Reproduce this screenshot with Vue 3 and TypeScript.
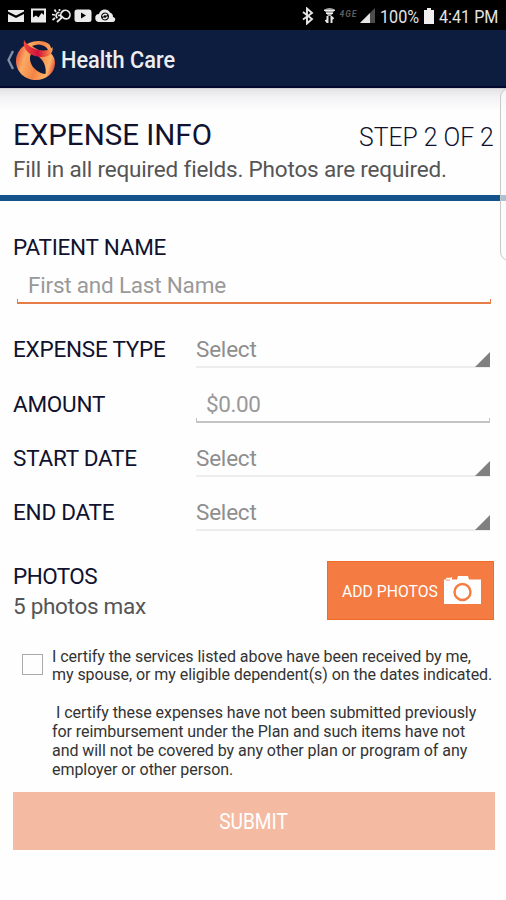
<script setup lang="ts">
import { ref } from 'vue'

interface Field {
  label: string
  kind: 'select' | 'amount'
  placeholder: string
}

const fields: Field[] = [
  { label: 'EXPENSE TYPE', kind: 'select', placeholder: 'Select' },
  { label: 'AMOUNT', kind: 'amount', placeholder: '$0.00' },
  { label: 'START DATE', kind: 'select', placeholder: 'Select' },
  { label: 'END DATE', kind: 'select', placeholder: 'Select' },
]

const patientName = ref('')
const amount = ref('')
const certified = ref(false)
</script>

<template>
  <div class="screen">
    <div class="status">
      <svg class="status-left" width="108" height="18" viewBox="0 0 108 18" fill="#ebebeb">
        <path d="M0 3h16v1.500L8 8.500 0 4.500zM0 7l8 4 8-4v8H0z" />
        <path fill-rule="evenodd" d="M23 1.500h15v14H23zM25 3.500v7l3-2 2.500 2 3-4.500 2.500 2V3.500z" />
        <g fill="none" stroke="#ebebeb" stroke-width="1.700">
          <path d="M54 11a4.600 4.600 0 1 1 6.500 0.300Q57 13 54.500 10 53 8 50 8.500M55 9.500 49 15M51.500 5.500a3 3 0 0 0-2 5.500M46.500 2.500l1.500 2.500M44 7.500l3 .5M44.500 13l2.500-2M51.500 2v2" />
        </g>
        <path fill-rule="evenodd" d="M69 2.500h12q2.500 0 2.500 2.500v7.500q0 2.500-2.500 2.500H69q-2.500 0-2.500-2.500V5q0-2.500 2.500-2.500zM73 5.500v6l5-3z" />
        <path fill-rule="evenodd" d="M91.500 15a4 4 0 0 1-.5-8 6 6 0 0 1 11-1.500 4.500 4.500 0 0 1 3 4.500q3 .5 2 3.500-.5 1.500-3 1.500zM97 5.500a4 4 0 1 0 .1 0z" />
        <path d="M94.800 9.500a2.200 2.200 0 0 1 4-1.200M99.200 9.500a2.200 2.200 0 0 1-4 1.200" fill="none" stroke="#ebebeb" stroke-width="1.600" />
      </svg>
      <div class="status-right">
        <svg width="76" height="18" viewBox="0 0 76 18">
          <path d="M3 5l9 7-5 4.500v-15L12 6l-9 6.500" fill="none" stroke="#e6e6e6" stroke-width="1.900" />
          <path d="M24 2.500q5.500-3 11 0L31 9h-3z" fill="#a9a9a9" />
          <path d="M24 3.500h11M26 6.500h7" stroke="#ededed" stroke-width="1.200" />
          <path d="M27.500 9v7M25.500 13l2 2.500M31.500 16V9M33.500 12l-2-2.500" fill="none" stroke="#e6e6e6" stroke-width="2" />
          <text x="39.500" y="9.500" class="network" textLength="17">4GE</text>
          <path d="M60 16 75 1v15z" fill="#4c4c4c" />
          <path d="M60 16 70 6v10z" fill="#e6e6e6" />
        </svg>
        <span class="battery-text">100%</span>
        <svg class="battery" width="10" height="16" viewBox="0 0 10 16"><path d="M3 0h4v2h3v14H0V2h3z" fill="#f0f0f0" /></svg>
        <span class="clock">4:41 PM</span>
      </div>
    </div>

    <header class="app-bar">
      <svg class="back" width="8" height="20" viewBox="0 0 8 20"><path d="M7 1 2.500 10 7 19" fill="none" stroke="#8290a8" stroke-width="2.300" /></svg>
      <svg class="logo" width="41" height="41" viewBox="0 0 41 41">
        <defs>
          <linearGradient id="ring" x1="0" y1="0.350" x2="1" y2="0.650">
            <stop offset="0" stop-color="#e9513b" />
            <stop offset="0.220" stop-color="#fbaa62" />
            <stop offset="0.550" stop-color="#f58346" />
            <stop offset="0.850" stop-color="#fdb467" />
            <stop offset="1" stop-color="#e44b3c" />
          </linearGradient>
          <linearGradient id="ribbon" x1="0" y1="0" x2="1" y2="0">
            <stop offset="0" stop-color="#ef493a" />
            <stop offset="0.500" stop-color="#ce123d" />
            <stop offset="0.800" stop-color="#f0643e" />
            <stop offset="1" stop-color="#fca45c" />
          </linearGradient>
        </defs>
        <path d="M12 4C19 0 29 0 34 4q3 3 1.500 9Q40 17 40 23C40 33 31 40 21 40 10 40 1 32 1 21 1 13 6 7 12 4z" fill="url(#ring)" />
        <path d="M17 6q7-3 12 0 4 2 4 5-7 2-16-5z" fill="#0d1a3b" />
        <path d="M16 14C25 14 32 24 30.500 34 20 33 12 22 16 14z" fill="#0d1a3b" />
        <path d="M9 0c4 7 11 10 19 10.500 5 0 8-1 9.500-3.500 1 6-3 10-10 10C17 17 7 11 9 0z" fill="url(#ribbon)" />
      </svg>
      <span class="app-title">Health Care</span>
    </header>

    <main>
      <section class="intro">
        <div class="intro-head">
          <h1>EXPENSE INFO</h1>
          <span class="step">STEP 2 OF 2</span>
        </div>
        <p>Fill in all required fields. Photos are required.</p>
      </section>

      <section class="patient">
        <label class="label" for="patient">PATIENT NAME</label>
        <div class="line-input active">
          <input id="patient" v-model="patientName" type="text" placeholder="First and Last Name" />
        </div>
      </section>

      <div v-for="field in fields" :key="field.label" class="row">
        <span class="label">{{ field.label }}</span>
        <button v-if="field.kind === 'select'" class="select" type="button">
          <span>{{ field.placeholder }}</span>
          <svg width="15" height="15" viewBox="0 0 15 15"><path d="M15 0v15H0z" fill="#808080" /></svg>
        </button>
        <div v-else class="line-input amount">
          <input v-model="amount" type="text" :placeholder="field.placeholder" />
        </div>
      </div>

      <section class="photos">
        <div class="photos-text">
          <span class="label">PHOTOS</span>
          <span class="hint">5 photos max</span>
        </div>
        <button class="add" type="button">
          <span>ADD PHOTOS</span>
          <svg width="37" height="29" viewBox="0 0 37 29">
            <path d="M0 3.500h2V1h6v2.500h5L14 0h10l1 3.500h12V28H0z" fill="#fff" />
            <path d="M1 1.500h6M2 4h4" stroke="#f47b42" stroke-width="0.800" />
            <circle cx="18.500" cy="16" r="8" fill="none" stroke="#f47b42" stroke-width="2.400" />
          </svg>
        </button>
      </section>

      <section class="certify">
        <input v-model="certified" type="checkbox" class="check" aria-labelledby="terms" />
        <div id="terms">
          <p>I certify the services listed above have been received by me,<br />my spouse, or my eligible dependent(s) on the dates indicated.</p>
          <p><span class="indent">I certify these expenses have not been submitted previously</span><br />for reimbursement under the Plan and such items have not<br />and will not be covered by any other plan or program of any<br />employer or other person.</p>
        </div>
      </section>

      <button class="submit" type="button"><span>SUBMIT</span></button>
    </main>
    <div class="edge-panel"></div>
  </div>
</template>

<style>
body {
  margin: 0;
}
</style>

<style scoped>
.screen {
  position: relative;
  width: 506px;
  height: 900px;
  overflow: hidden;
  background: #fefefe;
  font-family: Roboto, "Liberation Sans", sans-serif;
  color: #10122f;
}
.screen * {
  box-sizing: border-box;
}
button,
input {
  font-family: inherit;
  border: 0;
  padding: 0;
  margin: 0;
  background: none;
  border-radius: 0;
}
span {
  white-space: nowrap;
}
.status {
  height: 30px;
  background: #000;
  display: flex;
  align-items: center;
  justify-content: space-between;
  padding: 2px 8px 0;
}
.status-right {
  display: flex;
  align-items: center;
  color: #e4e4e4;
  font-size: 19px;
}
.network {
  font-size: 8.500px;
  font-style: italic;
  font-weight: 700;
  fill: #5c5c5c;
}
.battery-text {
  margin-left: 4px;
  width: 39px;
  transform: scaleX(0.850);
  transform-origin: left;
}
.battery {
  margin-left: 5px;
}
.clock {
  margin-left: 5px;
  width: 59px;
  transform: scaleX(0.850);
  transform-origin: left;
}
.app-bar {
  height: 58px;
  background: #0d1d40;
  border-bottom: 2px solid #03082e;
  display: flex;
  align-items: center;
  padding: 4px 0 0 6px;
}
.logo {
  margin-left: 1px;
}
.app-title {
  margin-left: 5px;
  font-size: 23px;
  transform: scaleX(0.945);
  transform-origin: left;
  font-weight: 500;
  color: #ededf0;
}
.intro {
  height: 113px;
  padding: 29px 12px 0 13px;
  border-bottom: 6px solid #145389;
  background: linear-gradient(#bebebe 0, #e3e3e6 1px, #f2f2f4 9px, #fefefe 22px);
}
.intro-head {
  display: flex;
  justify-content: space-between;
  height: 36px;
}
h1 {
  margin: 0;
  font-size: 29.500px;
  line-height: 36px;
  font-weight: 400;
  white-space: nowrap;
}
.step {
  font-size: 26px;
  line-height: 40px;
  font-weight: 300;
  transform: scaleX(0.950);
  transform-origin: right;
}
.intro p {
  margin: 2px 0 0;
  font-size: 22.500px;
  letter-spacing: -0.180px;
  line-height: 28px;
  color: #555;
  white-space: nowrap;
}
.label {
  font-size: 22.500px;
  line-height: 28px;
  letter-spacing: -0.230px;
}
.patient {
  height: 121px;
  padding: 32px 15px 0 13px;
}
.patient .label {
  display: block;
}
.line-input {
  position: relative;
  display: flex;
  border-bottom: 2px solid #c4c4c4;
}
.line-input::before,
.line-input::after {
  content: "";
  position: absolute;
  bottom: 0;
  width: 1px;
  height: 3px;
  background: #c4c4c4;
}
.line-input::before {
  left: 0;
}
.line-input::after {
  right: 0;
}
.active {
  margin: 8px 0 0 4px;
  height: 35px;
  border-color: #e67c48;
}
.active::before,
.active::after {
  background: #e67c48;
}
.line-input input {
  width: 100%;
  height: 31px;
  padding-left: 11px;
  font-size: 22.500px;
  letter-spacing: -0.210px;
  outline: none;
}
input::placeholder {
  color: #999;
  opacity: 1;
}
.row {
  height: 54.400px;
  padding: 0 16px 0 13px;
  display: grid;
  grid-template-columns: 183px 1fr;
  align-items: center;
}
.select {
  display: flex;
  justify-content: space-between;
  align-items: flex-end;
  height: 38px;
  border-bottom: 2px solid #ededed;
  font-size: 22.500px;
  letter-spacing: -0.210px;
  line-height: 28px;
  color: #8e8e8e;
}
.select span {
  margin-bottom: 3px;
}
.select svg {
  margin-bottom: -1px;
}
.amount {
  height: 38px;
}
.line-input.amount input {
  height: 38px;
  padding-left: 10px;
  letter-spacing: -0.400px;
}
.photos {
  margin-top: 21px;
  height: 59px;
  padding: 0 12px 0 13px;
  display: flex;
  justify-content: space-between;
}
.photos-text {
  display: flex;
  flex-direction: column;
  padding-top: 1px;
}
.photos-text .label {
  letter-spacing: -0.550px;
}
.hint {
  margin-top: 1px;
  font-size: 22.500px;
  letter-spacing: -0.300px;
  line-height: 30px;
  color: #555;
}
.add {
  width: 167px;
  background: #f47b42;
  border: 1px solid #f06b28;
  color: #fff;
  font-size: 17px;
  display: flex;
  align-items: center;
  padding: 2px 0 0 14px;
}
.add span {
  width: 96px;
  text-align: left;
  transform: scaleX(0.925);
  transform-origin: left;
}
.add svg {
  margin: 0 0 1px 6px;
}
.certify {
  display: flex;
  padding: 28px 0 0 22px;
  height: 172px;
}
.check {
  appearance: none;
  width: 21px;
  height: 21px;
  margin: 6px 9px 0 0;
  border: 1.500px solid #aaa;
  flex: none;
}
.certify p {
  margin: 0 0 19px;
  font-size: 16px;
  letter-spacing: -0.055px;
  line-height: 18.800px;
  color: #333;
  white-space: nowrap;
}
.indent {
  margin-left: 4px;
}
.submit {
  display: block;
  width: 482px;
  height: 58px;
  margin-left: 12.500px;
  padding-top: 2px;
  background: #f5bba2;
  color: #fff;
  font-size: 22px;
}
.submit span {
  display: inline-block;
  transform: scaleX(0.870);
}
.edge-panel {
  position: absolute;
  left: 500px;
  top: 88px;
  width: 20px;
  height: 173px;
  border: 1px solid #c9c9c9;
  border-radius: 9px;
  background: rgba(250, 250, 250, 0.650);
}
</style>
